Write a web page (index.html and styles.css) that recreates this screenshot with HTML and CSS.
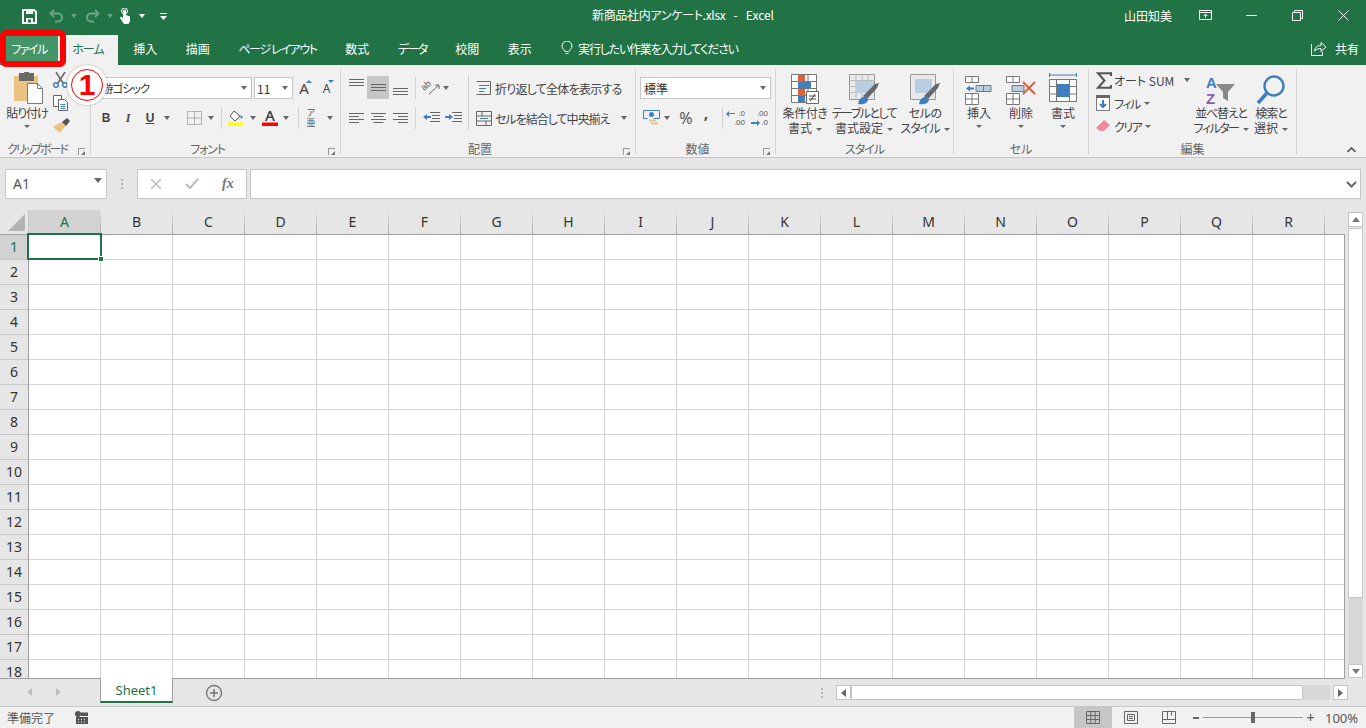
FILE: index.html
```html
<!DOCTYPE html>
<html lang="ja">
<head>
<meta charset="utf-8">
<title>新商品社内アンケート.xlsx - Excel</title>
<link rel="stylesheet" href="styles.css">
</head>
<body>
<div class="app">
  <header class="titlebar">
    <div class="qat">
      <span class="slot q-save"><svg width="15" height="15" viewBox="0 0 15 15"><path d="M1 1h11l2 2v11H1z" fill="none" stroke="#fff" stroke-width="2"/><path d="M4 1h7v4H4zM4 9h7v5H4z" fill="#fff"/><path d="M6 10.500h3v3H6z" fill="#217346"/></svg></span>
      <span class="slot q-undo"><svg width="15" height="14" viewBox="0 0 15 14"><path d="M5 1 1.500 4.500 5 8M2 4.500h7a4 4 0 0 1 0 8H6" fill="none" stroke="#6ba588" stroke-width="2"/></svg></span>
      <span class="slot q-car"><i class="caret dim"></i></span>
      <span class="slot q-redo"><svg width="15" height="14" viewBox="0 0 15 14"><path d="M10 1l3.500 3.500L10 8M13 4.500H6a4 4 0 0 0 0 8h3" fill="none" stroke="#6ba588" stroke-width="2"/></svg></span>
      <span class="slot q-car"><i class="caret dim"></i></span>
      <span class="slot q-touch"><svg width="13" height="16" viewBox="0 0 13 16"><path d="M4 7V3a1.500 1.500 0 0 1 3 0v4l4 1.500V13l-1.500 3H5L1 10l1-1.500L4 10z" fill="#fff"/><circle cx="5.500" cy="3" r="3" fill="none" stroke="#fff"/></svg></span>
      <span class="slot q-car2"><i class="caret wh"></i></span>
      <span class="slot q-cust"><svg width="7" height="7" viewBox="0 0 7 7"><path d="M0 0h7v1H0zM0 3h7L3.500 7z" fill="#fff"/></svg></span>
    </div>
    <div class="doc"><span class="t3">新商品社内アンケート.xlsx</span>&nbsp;&nbsp; - &nbsp;&nbsp;Excel</div>
    <div class="win">
      <span class="user">山田知美</span>
      <span class="winbtn"><svg width="13" height="10" viewBox="0 0 13 10"><path d="M.5.500h12v9H.5zM.5 2.500h12M6.500 8V4M4.500 6l2-2 2 2" fill="none" stroke="#fff"/></svg></span>
      <span class="winbtn"><svg width="11" height="1" viewBox="0 0 11 1"><path d="M0 0h11v1H0z" fill="#fff"/></svg></span>
      <span class="winbtn"><svg width="11" height="11" viewBox="0 0 11 11"><path d="M.5 2.500h8v8h-8zM2.500 2.500v-2h8v8h-2" fill="none" stroke="#fff"/></svg></span>
      <span class="winbtn"><svg width="11" height="11" viewBox="0 0 11 11"><path d="M.5.500l10 10M10.500.500l-10 10" fill="none" stroke="#fff"/></svg></span>
    </div>
  </header>

  <nav class="tabs">
    <span class="tab file t15">ファイル</span>
    <span class="tab home t1">ホーム</span>
    <span class="tab first">挿入</span>
    <span class="tab">描画</span>
    <span class="tab t13">ページ レイアウト</span>
    <span class="tab">数式</span>
    <span class="tab t15">データ</span>
    <span class="tab">校閲</span>
    <span class="tab">表示</span>
    <span class="tell"><svg width="12" height="15" viewBox="0 0 12 15"><path d="M4 10.500C3 8 1 7.500 1 5a5 5 0 0 1 10 0c0 2.500-2 3-3 5.500zM4.500 12.500h3" fill="none" stroke="#fff"/></svg><span class="t12">実行したい作業を入力してください</span></span>
    <span class="share"><svg width="16" height="16" viewBox="0 0 16 16"><path d="M.5 4v11.500h11V12" fill="none" stroke="#fff"/><path d="M3.500 11C4 7 6.500 5.500 10 5.500V2.500l5 4.500-5 4.500V8.500C7.500 8.500 5.500 9 3.500 11z" fill="none" stroke="#fff"/></svg>共有</span>
  </nav>

  <section class="ribbon">
    <div class="group g-clip">
      <div class="gbody row-top">
        <div class="big paste">
          <span class="bigicon shift"><svg class="flat" width="32" height="34" viewBox="0 0 32 34"><path d="M1 4h24v25H1z" fill="#ecc283"/><path d="M6 1h15v8H6z" fill="#6a6a6a"/><path d="M11 0h5v3h-5z" fill="#6a6a6a"/><path d="M14.500 11.500h10l5 5v15h-15z" fill="#fff" stroke="#7a7a7a"/><path d="M24.500 11.500v5h5" fill="none" stroke="#7a7a7a"/></svg></span>
          <span class="t1">貼り付け</span>
          <i class="caret"></i>
        </div>
        <div class="clip-tools">
          <span class="tool"><svg width="15" height="16" viewBox="0 0 15 16"><path d="M3 0l7 11M12 0L5 11" stroke="#666" stroke-width="1.500" fill="none"/><circle cx="3" cy="13" r="2.300" fill="none" stroke="#3f7fc0" stroke-width="1.500"/><circle cx="12" cy="13" r="2.300" fill="none" stroke="#3f7fc0" stroke-width="1.500"/></svg></span>
          <span class="tool"><svg width="16" height="16" viewBox="0 0 16 16"><path d="M.5.500h8v11h-8z" fill="#fff" stroke="#666"/><path d="M5.500 4.500h6l3 3v8h-9z" fill="#fff" stroke="#666"/><path d="M7.500 9.500h5M7.500 11.500h5M7.500 13.500h5" stroke="#3f7fc0"/></svg></span>
          <span class="tool"><svg width="17" height="16" viewBox="0 0 17 16"><path d="M9 4l4 4-4 4-2 3-7-6 3-2z" fill="#ecc283"/><path d="M9 4l5-4 3 3-4 5z" fill="#555"/></svg></span>
        </div>
      </div>
      <div class="glabel pad t2">クリップボード</div>
      <i class="launch"></i>
    </div>

    <div class="group g-font">
      <div class="gbody col">
        <div class="line l1">
          <span class="select fontsel t1">游ゴシック<i class="caret end"></i></span>
          <span class="select sizesel">11<i class="caret end"></i></span>
          <span class="slot w22 aa">A<i class="aup"></i></span>
          <span class="slot w22 aa small">A<i class="adn"></i></span>
        </div>
        <div class="line l2 font2">
          <span class="slot w22 fmt b">B</span>
          <span class="slot w22 fmt it">I</span>
          <span class="slot w22 fmt u">U</span>
          <span class="slot w12"><i class="caret"></i></span>
          <span class="slot w22 ml10"><svg width="15" height="14" viewBox="0 0 15 14"><path d="M.5.500h14v13H.5zM7.500.500v13M.5 7h14" fill="none" stroke="#777" stroke-dasharray="1 1"/></svg></span>
          <span class="slot w12"><i class="caret"></i></span>
          <i class="sep ml4"></i>
          <span class="slot w26 ml1"><svg width="18" height="16" viewBox="0 0 18 16"><path d="M7 1l6 5-5 5-5-5z" fill="#fff" stroke="#555"/><path d="M13 5l3 2-2 2z" fill="#3f7fc0"/><path d="M1 12.500h15V16H1z" fill="#ff0"/></svg></span>
          <span class="slot w8"><i class="caret"></i></span>
          <span class="slot w24 ml1"><svg width="16" height="16" viewBox="0 0 16 16"><path d="M3 11 7 1h2l4 10h-2L10 8H6l-1 3zM6.700 6.500h2.600L8 3z" fill="#444"/><path d="M0 12.500h16V16H0z" fill="#f00"/></svg></span>
          <span class="slot w8"><i class="caret"></i></span>
          <i class="sep ml8"></i>
          <span class="slot w27 phon"><b>ア</b><b>亜</b></span>
          <span class="slot w8"><i class="caret"></i></span>
        </div>
      </div>
      <div class="glabel pad t12">フォント</div>
      <i class="launch"></i>
    </div>

    <div class="group g-align">
      <div class="gbody align-body">
        <div class="col align-left">
          <div class="line l1">
            <span class="slot w22 al-top"><svg width="15" height="7" viewBox="0 0 15 7"><path d="M0 .500h15M0 3.500h15M0 6.500h15" stroke="#666"/></svg></span>
            <span class="slot w22 active"><svg width="15" height="7" viewBox="0 0 15 7"><path d="M0 .500h15M0 3.500h15M0 6.500h15" stroke="#666"/></svg></span>
            <span class="slot w22 al-bot"><svg width="15" height="7" viewBox="0 0 15 7"><path d="M0 .500h15M0 3.500h15M0 6.500h15" stroke="#666"/></svg></span>
            <i class="sep ml4"></i>
            <span class="slot w22 ml4"><svg class="orient-icon" width="17" height="15" viewBox="0 0 17 15"><text class="orient" transform="translate(1 10) rotate(-40)">ab</text><path d="M6 13 16 4M16 4v4M16 4h-4" fill="none" stroke="#666"/></svg></span>
            <span class="slot w8"><i class="caret"></i></span>
          </div>
          <div class="line l2">
            <span class="slot w22"><svg width="15" height="10" viewBox="0 0 15 10"><path d="M0 .500h15M0 3.500h10M0 6.500h15M0 9.500h10" stroke="#666"/></svg></span>
            <span class="slot w22"><svg width="15" height="10" viewBox="0 0 15 10"><path d="M0 .500h15M2.500 3.500h10M0 6.500h15M2.500 9.500h10" stroke="#666"/></svg></span>
            <span class="slot w22"><svg width="15" height="10" viewBox="0 0 15 10"><path d="M0 .500h15M5 3.500h10M0 6.500h15M5 9.500h10" stroke="#666"/></svg></span>
            <i class="sep ml4"></i>
            <span class="slot w22 ml4"><svg width="17" height="12" viewBox="0 0 17 12"><path d="M7 .500h10M9 3.500h8M9 6.500h8M7 9.500h10" stroke="#666" fill="none"/><path d="M0 5l4-3v2h4v2H4v2z" fill="#3f7fc0"/></svg></span>
            <span class="slot w22"><svg width="17" height="12" viewBox="0 0 17 12"><path d="M7 .500h10M9 3.500h8M9 6.500h8M7 9.500h10" stroke="#666" fill="none"/><path d="M8 5 4 2v2H0v2h4v2z" fill="#3f7fc0"/></svg></span>
          </div>
        </div>
        <i class="sep tall"></i>
        <div class="col align-right">
          <div class="line l1 cmd"><svg width="16" height="14" viewBox="0 0 16 14"><path d="M.5.500h14v13H.5" fill="none" stroke="#666"/><path d="M3 4.500h10M3 7.500h7M3 10.500h5" stroke="#3f7fc0"/></svg><span class="t75">折り返して全体を表示する</span></div>
          <div class="line l2 cmd"><svg width="16" height="15" viewBox="0 0 16 15"><path d="M.5.500h15v14H.5zM.5 5h15M.5 10h15M6 .500V5M10 10v4.500" fill="none" stroke="#666"/><path d="M4 7.500h8" stroke="#3f7fc0"/></svg><span class="t1">セルを結合して中央揃え</span><i class="caret merge"></i></div>
        </div>
      </div>
      <div class="glabel pad">配置</div>
      <i class="launch"></i>
    </div>

    <div class="group g-num">
      <div class="gbody col">
        <div class="line l1"><span class="select numsel">標準<i class="caret end"></i></span></div>
        <div class="line l2">
          <span class="slot w22"><svg width="17" height="16" viewBox="0 0 17 16"><path d="M.5.500h16v8h-6M.5.500v8h4" fill="none" stroke="#3f7fc0"/><circle cx="8.500" cy="4.500" r="2.500" fill="#3f7fc0"/><path d="M6 9.500h7v2H6zM8 12.500h7v2H8z" fill="#ecc283"/></svg></span>
          <span class="slot w8 ml1"><i class="caret"></i></span>
          <span class="slot w22 ml4 pct">%</span>
          <span class="slot w18 comma">,</span>
          <i class="sep ml7"></i>
          <span class="slot w22 ml3 dec"><span class="decl"><i class="arr left"></i>.0</span><span class="decl">.00</span></span>
          <span class="slot w22 ml1 dec"><span class="decl">.00</span><span class="decl"><i class="arr right"></i>.0</span></span>
        </div>
      </div>
      <div class="glabel pad">数値</div>
      <i class="launch"></i>
    </div>

    <div class="group g-style">
      <div class="gbody row-top">
        <div class="big w58">
          <span class="bigicon"><svg width="28" height="34" viewBox="0 0 28 34"><path d="M.5.500h25v28H.5zM.5 7.500h25M.5 14.500h25M.5 21.500h25M8.500.500v28M17 .500v28" fill="#fff" stroke="#777"/><path d="M7 1h7v7H7zM7 15h7v7H7z" fill="#e0603a"/><path d="M7 8h13v6H7zM7 22h7v6H7z" fill="#3f7fc0"/><path d="M15.500 17.500h12v12h-12z" fill="#fff" stroke="#666"/><path d="M18 22h7M18 25h7M24 20l-5 7.500" fill="none" stroke="#444"/></svg></span>
          <span class="t5">条件付き</span><span>書式<i class="caret il"></i></span>
        </div>
        <div class="big w60">
          <span class="bigicon"><svg width="30" height="34" viewBox="0 0 30 34"><path d="M.5.500h25v25H.5z" fill="#e9e9e9" stroke="#999"/><path d="M.5 6.500h25M.5 12.500h25M.5 18.500h25M7 .500v25M13 .500v25M19 .500v25" stroke="#bbb"/><path d="M7 7h18v12H7z" fill="#b9cde3"/><path d="M14 22 26 10l4-1-2 5-10 11z" fill="#666"/><path d="M9 30c1-6 5-8 9-7l1 3c-1 4-6 5-10 4z" fill="#3f7fc0"/></svg></span>
          <span class="t15">テーブルとして</span><span>書式設定<i class="caret il"></i></span>
        </div>
        <div class="big w56 ml3">
          <span class="bigicon"><svg width="30" height="34" viewBox="0 0 30 34"><path d="M.5.500h25v25H.5z" fill="#e9e9e9" stroke="#999"/><path d="M5 5h17v14H5z" fill="#b9cde3"/><path d="M14 22 26 10l4-1-2 5-10 11z" fill="#666"/><path d="M9 30c1-6 5-8 9-7l1 3c-1 4-6 5-10 4z" fill="#3f7fc0"/></svg></span>
          <span class="t5">セルの</span><span class="t1">スタイル<i class="caret il"></i></span>
        </div>
      </div>
      <div class="glabel t1">スタイル</div>
    </div>

    <div class="group g-cells">
      <div class="gbody row-top">
        <div class="big w42">
          <span class="bigicon"><svg width="28" height="34" viewBox="0 0 28 34"><path d="M.5 2.500h13v6H.5zM7 2.500v6M.5 19.500h13v11H.5zM.5 25h13M7 19.500v11" fill="#fff" stroke="#777"/><path d="M11 11.500h15v6H11zM18.500 11.500v6" fill="#b9cde3" stroke="#777"/><path d="M1 14.500l4-3v2h4v2H5v2z" fill="#3f7fc0"/></svg></span>
          <span>挿入</span><i class="caret"></i>
        </div>
        <div class="big w42">
          <span class="bigicon"><svg width="30" height="34" viewBox="0 0 30 34"><path d="M.5 2.500h13v6H.5zM7 2.500v6M.5 19.500h13v11H.5zM.5 25h13M7 19.500v11" fill="#fff" stroke="#777"/><path d="M6 11.500h12v6H6z" fill="#b9cde3" stroke="#777"/><path d="M17 8l12 12M29 8 17 20" stroke="#e0603a" stroke-width="2"/></svg></span>
          <span>削除</span><i class="caret"></i>
        </div>
        <div class="big w42">
          <span class="bigicon fmt-icon"><svg width="28" height="34" viewBox="0 0 28 34"><path d="M.5 3h27M.5 1v4M27.500 1v4" stroke="#3f7fc0" fill="none"/><path d="M.5 7.500h27v22H.5zM.5 14.500h27M.5 22h27M7.500 7.500v22M20.500 7.500v22" fill="#fff" stroke="#777"/><path d="M8 12h12v13H8z" fill="#3f7fc0"/></svg></span>
          <span>書式</span><i class="caret"></i>
        </div>
      </div>
      <div class="glabel">セル</div>
    </div>

    <div class="group g-edit">
      <div class="gbody row-top">
        <div class="edit-col">
          <div class="eline"><svg class="sigma" width="16" height="17" viewBox="0 0 16 17"><path d="M15 4V1.200H2L8.500 8.500 2 15.800h13V13" fill="none" stroke="#555" stroke-width="2"/></svg><span>オート SUM</span><i class="caret ml10"></i></div>
          <div class="eline"><svg width="14" height="16" viewBox="0 0 14 16"><path d="M.5.500h13v15H.5z" fill="#fff" stroke="#777"/><path d="M0 0h14v3H0z" fill="#666"/><path d="M7 5v7M4 9l3 3 3-3" fill="none" stroke="#3f7fc0" stroke-width="2"/></svg><span class="ell t15">フィル</span><i class="caret il"></i></div>
          <div class="eline"><svg width="14" height="13" viewBox="0 0 14 13"><path d="M8 0l6 5-6 6H4L0 8z" fill="#ee8a9a"/></svg><span class="ell t15">クリア</span><i class="caret il"></i></div>
        </div>
        <div class="big w56">
          <span class="bigicon"><svg width="32" height="34" viewBox="0 0 32 34"><text x="1" y="14" class="az a">A</text><text x="1" y="30" class="az z">Z</text><path d="M11 10h19l-7 8v9l-5-3v-6z" fill="#8a8a8a"/></svg></span>
          <span class="t12">並べ替えと</span><span class="t15">フィルター<i class="caret il"></i></span>
        </div>
        <div class="big w44">
          <span class="bigicon"><svg width="30" height="34" viewBox="0 0 30 34"><circle cx="18" cy="12" r="9.500" fill="none" stroke="#3f7fc0" stroke-width="2.400"/><path d="M11 19 2 29" stroke="#3f7fc0" stroke-width="3.500"/></svg></span>
          <span class="t1">検索と</span><span>選択<i class="caret il"></i></span>
        </div>
      </div>
      <div class="glabel">編集</div>
    </div>
    <svg class="collapse" width="9" height="6" viewBox="0 0 9 6"><path d="M.5 5l4-4 4 4" fill="none" stroke="#555" stroke-width="1.600"/></svg>
  </section>

  <section class="fbar">
    <div class="box namebox">A1<i class="caret end big-car"></i></div>
    <div class="grip"><i></i><i></i><i></i></div>
    <div class="box fxbox">
      <svg width="12" height="12" viewBox="0 0 12 12"><path d="M1 1l10 10M11 1 1 11" stroke="#bdbdbd" stroke-width="1.500"/></svg>
      <svg width="14" height="12" viewBox="0 0 14 12"><path d="M1 6l4 4 8-9" fill="none" stroke="#bdbdbd" stroke-width="2.200"/></svg>
      <span class="fx">fx</span>
    </div>
    <div class="box formula"><svg class="chev" width="11" height="7" viewBox="0 0 11 7"><path d="M1 1l4.500 4.500L10 1" fill="none" stroke="#666" stroke-width="2"/></svg></div>
  </section>

  <section class="sheet">
    <div class="sheet-main">
      <div class="colhead">
        <div class="corner"><i></i></div>
        <div class="ch on">A</div><div class="ch">B</div><div class="ch">C</div><div class="ch">D</div><div class="ch">E</div><div class="ch">F</div><div class="ch">G</div><div class="ch">H</div><div class="ch">I</div><div class="ch">J</div><div class="ch">K</div><div class="ch">L</div><div class="ch">M</div><div class="ch">N</div><div class="ch">O</div><div class="ch">P</div><div class="ch">Q</div><div class="ch">R</div><div class="ch tail"></div>
      </div>
      <div class="gridbody">
        <div class="rowhead">
          <div class="rh on">1</div><div class="rh">2</div><div class="rh">3</div><div class="rh">4</div><div class="rh">5</div><div class="rh">6</div><div class="rh">7</div><div class="rh">8</div><div class="rh">9</div><div class="rh">10</div><div class="rh">11</div><div class="rh">12</div><div class="rh">13</div><div class="rh">14</div><div class="rh">15</div><div class="rh">16</div><div class="rh">17</div><div class="rh">18</div>
        </div>
        <div class="cells"></div>
        <div class="selection"><i></i></div>
      </div>
    </div>
    <div class="vscroll">
      <span class="sbtn up"></span>
      <span class="thumb"></span>
      <span class="track"></span>
      <span class="sbtn down"></span>
    </div>
  </section>

  <section class="tabbar">
    <div class="nav"><i class="tri l"></i><i class="tri r"></i></div>
    <div class="sheettab">Sheet1</div>
    <svg class="addsheet" width="18" height="18" viewBox="0 0 18 18"><circle cx="9" cy="9" r="7.500" fill="none" stroke="#777" stroke-width="1.300"/><path d="M5 9h8M9 5v8" stroke="#777" stroke-width="1.600"/></svg>
    <div class="hs">
      <div class="grip g2"><i></i><i></i><i></i></div>
      <span class="hbtn"><i class="tri l dark"></i></span>
      <span class="hthumb"></span>
      <span class="htrack"></span>
      <span class="hbtn last"><i class="tri r dark"></i></span>
    </div>
  </section>

  <footer class="status">
    <span class="ready">準備完了</span>
    <svg class="macro" width="13" height="13" viewBox="0 0 13 13"><circle cx="3" cy="3" r="3" fill="#555"/><path d="M1 6h12v7H1zM6 1.500h7V5H6z" fill="#555"/><path d="M3 8h1v1H3zM6 8h1v1H6zM9 8h1v1H9zM3 10.500h1v1H3zM6 10.500h1v1H6zM9 10.500h1v1H9z" fill="#f1f1f1"/></svg>
    <div class="views">
      <span class="view on"><svg width="14" height="13" viewBox="0 0 14 13"><path d="M.5.500h13v12H.5zM.5 4.500h13M.5 8.500h13M4.800.500v12M9.200.500v12" fill="none" stroke="#666"/></svg></span>
      <span class="view"><svg width="14" height="13" viewBox="0 0 14 13"><path d="M.5.500h13v12H.5z" fill="none" stroke="#666"/><path d="M3.500 3.500h7v6h-7zM5 5.500h4M5 7.500h4" fill="none" stroke="#666"/></svg></span>
      <span class="view"><svg width="14" height="13" viewBox="0 0 14 13"><path d="M.5.500h13v12H.5zM.5 8.500h13M5.500.500v8M9.500.500v4" fill="none" stroke="#666"/></svg></span>
    </div>
    <div class="zoom">
      <i class="minus"></i>
      <div class="slider"><i></i></div>
      <svg width="7" height="7" viewBox="0 0 7 7"><path d="M0 3h7v1.300H0zM2.900 0h1.300v7H2.900z" fill="#666"/></svg>
      <span class="pctz">100%</span>
    </div>
  </footer>
</div>

<div class="mark-rect"></div>
<div class="mark-num"><span>1</span></div>
</body>
</html>
```
FILE: styles.css
```css
* { box-sizing: border-box; }
html, body { margin: 0; height: 100%; overflow: hidden; }
body {
  font-family: "Noto Sans CJK JP", "Noto Sans", sans-serif;
  font-size: 12px;
  color: #444;
  font-feature-settings: "palt";
  background: #e6e6e6;
}
i { font-style: normal; display: block; }
b { font-weight: normal; display: block; }
svg { display: block; flex: none; }
.app { display: flex; flex-direction: column; width: 1366px; height: 728px; }

.t3 { letter-spacing: -.3px; }
.t5 { letter-spacing: -.4px; }
.t75 { letter-spacing: -.75px; }
.t1 { letter-spacing: -1px; }
.t12 { letter-spacing: -1.2px; }
.t13 { letter-spacing: -1.35px; }
.t15 { letter-spacing: -1.5px; }
.t2 { letter-spacing: -2px; }

.caret { width: 0; height: 0; border-left: 3.5px solid transparent; border-right: 3.5px solid transparent; border-top: 4px solid #666; flex: none; }
.caret.dim { border-top-color: #6ba588; }
.caret.wh { border-top-color: #fff; }
.caret.il { display: inline-block; margin-left: 4px; vertical-align: 2px; border-left-width: 3px; border-right-width: 3px; border-top-width: 3px; }

.slot { display: flex; align-items: center; justify-content: center; flex: none; height: 22px; }
.w8 { width: 8px; } .w12 { width: 12px; } .w18 { width: 18px; } .w22 { width: 22px; } .w24 { width: 24px; } .w26 { width: 26px; } .w27 { width: 27px; }
.ml1 { margin-left: 1px; } .ml3 { margin-left: 3px; } .ml4 { margin-left: 4px; } .ml7 { margin-left: 7px; } .ml8 { margin-left: 8px; } .ml10 { margin-left: 10px; }

/* title bar */
.titlebar { height: 35px; background: #217346; color: #fff; display: grid; grid-template-columns: 1fr auto 1fr; align-items: start; flex: none; }
.qat { display: flex; align-items: center; padding-left: 15px; height: 32px; }
.q-save { width: 28px; } .q-undo { width: 27px; } .q-car { width: 8px; } .q-redo { width: 27px; margin-left: 1px; } .q-touch { width: 22px; } .q-car2 { width: 8px; margin-left: 2px; } .q-cust { width: 24px; margin-left: 5px; }
.doc { font-size: 12px; line-height: 30px; height: 30px; }
.win { display: flex; justify-content: flex-end; align-items: center; height: 30px; }
.user { margin-right: 10px; }
.winbtn { width: 46px; height: 30px; display: flex; align-items: center; justify-content: center; }

/* tabs */
.tabs { height: 30px; background: #217346; color: #fff; display: flex; align-items: stretch; flex: none; }
.tab { padding: 0 14.25px 4px; display: flex; align-items: center; white-space: nowrap; }
.tab.file { width: 58px; padding: 0 0 4px; justify-content: center; background: #439467; }
.tab.home { width: 60px; padding: 0 0 4px; justify-content: center; background: #f1f1f1; color: #217346; }
.tab.first { margin-left: 1px; }
.tell { display: flex; align-items: center; gap: 5px; margin-left: 15px; padding-bottom: 4px; }
.share { display: flex; align-items: center; gap: 8px; margin-left: auto; padding: 0 7px 4px 0; }

/* ribbon */
.ribbon { height: 93px; background: #f1f1f1; border-bottom: 1px solid #c6c6c6; display: flex; padding-top: 4px; position: relative; flex: none; }
.group { height: 85px; border-right: 1px solid #d6d6d6; display: flex; flex-direction: column; position: relative; padding-top: 3px; flex: none; }
.g-clip { width: 91px; } .g-font { width: 250px; } .g-align { width: 295px; } .g-num { width: 140px; } .g-style { width: 178px; } .g-cells { width: 135px; } .g-edit { width: 208px; }
.gbody { flex: 1; min-height: 0; }
.glabel { height: 14px; line-height: 14px; margin-bottom: -2px; text-align: center; color: #666; flex: none; }
.glabel.pad { padding-right: 16px; }
.launch { position: absolute; right: 5px; bottom: -1px; width: 7px; height: 7px; border-left: 1px solid #999; border-top: 1px solid #999; }
.launch::after { content: ""; position: absolute; right: 0; bottom: 0; width: 0; height: 0; border-left: 4px solid transparent; border-bottom: 4px solid #777; }
.row-top { display: flex; }
.col { display: flex; flex-direction: column; }
.line { display: flex; align-items: center; height: 22px; flex: none; }
.l1 { margin-top: 5px; }
.l2 { margin-top: 8px; }
.sep { width: 1px; height: 22px; background: #d0d0d0; flex: none; }
.sep.tall { height: 55px; margin-top: 3px; }

.big { display: flex; flex-direction: column; align-items: center; line-height: 15px; flex: none; white-space: nowrap; }
.big .caret:not(.il) { margin-top: 5px; border-left-width: 3px; border-right-width: 3px; border-top-width: 3px; }
.bigicon { height: 33px; display: flex; justify-content: center; }
.bigicon svg { margin-top: 2px; }
.bigicon svg.flat { margin-top: 0; }
.bigicon.shift { padding-left: 4px; }
.bigicon.fmt-icon svg { margin-top: 0; }
.w42 { width: 42px; } .w44 { width: 44px; } .w56 { width: 56px; } .w58 { width: 58px; } .w60 { width: 60px; }

.g-clip .gbody { padding-left: 5px; }
.paste { width: 44px; }
.clip-tools { display: flex; flex-direction: column; margin-left: 4px; gap: 7px; }
.tool { display: flex; height: 16px; }

.select { background: #fff; border: 1px solid #c6c6c6; height: 22px; display: flex; align-items: center; padding-left: 3px; position: relative; flex: none; color: #333; }
.caret.end { position: absolute; right: 4px; top: 8px; }
.fontsel { width: 153px; margin-left: 8px; padding-left: 2px; font-size: 11.5px; }
.sizesel { width: 39px; margin-left: 2px; padding-left: 2px; }
.aa { font-size: 15px; position: relative; font-family: "Noto Sans", sans-serif; margin-left: 2px; padding-right: 4px; }
.aa + .aa { margin-left: 0; padding-right: 3px; }
.aa.small { font-size: 12px; }
.aup, .adn { position: absolute; right: 5px; top: 3px; width: 0; height: 0; border-left: 3px solid transparent; border-right: 3px solid transparent; }
.aup { border-bottom: 3px solid #3f7fc0; }
.adn { border-top: 3px solid #3f7fc0; }
.font2 { padding-left: 4px; }
.fmt { font-family: "Liberation Sans", sans-serif; font-size: 12px; color: #444; font-weight: bold; }
.fmt.it { font-style: italic; font-family: "Liberation Serif", serif; }
.fmt.u { text-decoration: underline; }
.phon { flex-direction: column; font-family: "Liberation Sans", "Noto Sans CJK JP", sans-serif; line-height: 10.5px; font-size: 9px; color: #555; padding-right: 3px; }

.align-body { display: flex; padding-left: 4px; }
.align-left { width: 123px; flex: none; }
.al-top { align-items: flex-start; padding-top: 2px; }
.al-bot { align-items: flex-end; padding-bottom: 4px; }
.active { background: #c6c6c6; height: 23px; align-self: flex-start; margin-top: -1px; }
.orient-icon { overflow: visible; }
.orient { font-size: 9px; fill: #555; font-family: "Liberation Sans", sans-serif; }
.align-right { margin-left: 7px; flex: none; }
.cmd { gap: 3px; white-space: nowrap; }
.caret.merge { margin-left: 9px; }

.g-num .gbody { padding-left: 4px; }
.numsel { width: 131px; }
.pct { font-size: 16px; color: #555; font-family: "Noto Sans", sans-serif; }
.comma { font-size: 16px; font-weight: bold; color: #555; font-family: "Noto Sans", sans-serif; padding-bottom: 10px; }
.dec { flex-direction: column; align-items: stretch; font-family: "Liberation Sans", sans-serif; font-size: 8px; line-height: 9.5px; color: #555; padding: 0 3px 0 2px; }
.decl { display: flex; justify-content: flex-end; align-items: center; gap: 1px; height: 9.5px; }
.arr { width: 7px; height: 1.5px; background: #3f7fc0; position: relative; flex: none; margin-right: auto; }
.arr::after { content: ""; position: absolute; top: -2px; width: 0; height: 0; border-top: 3px solid transparent; border-bottom: 3px solid transparent; }
.arr.left::after { left: -2px; border-right: 3px solid #3f7fc0; }
.arr.right::after { right: -2px; border-left: 3px solid #3f7fc0; }
.az { font-family: "Liberation Sans", sans-serif; font-weight: bold; font-size: 15px; }
.az.a { fill: #3f7fc0; } .az.z { fill: #8e5cb5; }

.g-cells .gbody { padding-left: 4px; }
.g-edit .gbody { padding-left: 7px; }
.edit-col { width: 97px; margin-top: -3px; display: flex; flex-direction: column; gap: 1px; flex: none; }
.eline { height: 22px; display: flex; align-items: center; white-space: nowrap; }
.sigma { margin-right: 2px; }
.ell { margin-left: 4px; }
.collapse { position: absolute; right: 10px; bottom: 4px; }

/* formula bar */
.fbar { height: 52px; background: #e6e6e6; display: flex; align-items: flex-start; padding: 11px 0 0 5px; flex: none; }
.box { height: 30px; background: #fff; border: 1px solid #c6c6c6; flex: none; position: relative; }
.namebox { width: 102px; font-size: 14px; line-height: 28px; padding-left: 7px; color: #555; font-family: "Noto Sans", sans-serif; }
.big-car { top: 12px; right: 6px; border-left-width: 4px; border-right-width: 4px; border-top-width: 5px; }
.grip { width: 30px; height: 30px; display: flex; flex-direction: column; align-items: center; justify-content: center; gap: 2px; flex: none; }
.grip i { width: 2px; height: 2px; background: #b4b4b4; }
.fxbox { width: 110px; display: flex; align-items: center; padding-left: 12px; }
.fxbox svg + svg { margin-left: 23px; }
.fx { font-family: "Liberation Serif", serif; font-style: italic; font-weight: bold; font-size: 14px; color: #777; margin-left: 23px; }
.formula { width: 1111px; margin-left: 3px; }
.chev { position: absolute; right: 3px; top: 11px; }

/* sheet */
.sheet { height: 469px; display: flex; flex: none; background: #e6e6e6; }
.sheet-main { width: 1345px; height: 469px; border-bottom: 1px solid #9f9f9f; display: flex; flex-direction: column; overflow: hidden; }
.colhead { height: 25px; display: flex; flex: none; border-bottom: 1px solid #9f9f9f; }
.corner { width: 29px; position: relative; flex: none; border-right: 1px solid #c6c6c6; }
.corner i { position: absolute; right: 3px; bottom: 3px; width: 0; height: 0; border-left: 17px solid transparent; border-bottom: 17px solid #b4b4b4; }
.ch { width: 72px; flex: none; text-align: center; line-height: 24px; font-size: 14px; color: #333; font-family: "Noto Sans", sans-serif; border-right: 1px solid; border-image: linear-gradient(#e6e6e6, #a5a5a5) 1; }
.ch.on { background: #d2d2d2; color: #217346; }
.ch.tail { width: 20px; border: 0; }
.gridbody { flex: 1; display: flex; position: relative; min-height: 0; }
.rowhead { width: 29px; border-right: 1px solid #9f9f9f; flex: none; }
.rh { height: 25px; text-align: center; line-height: 24px; font-size: 14px; color: #333; font-family: "Noto Sans", sans-serif; border-bottom: 1px solid #c6c6c6; }
.rh.on { background: #d2d2d2; color: #217346; }
.cells { flex: 1; background-color: #fff; background-image: linear-gradient(to right, transparent 71px, #d4d4d4 71px), linear-gradient(to bottom, transparent 24px, #d4d4d4 24px); background-size: 72px 25px; border-right: 1px solid #9f9f9f; }
.selection { position: absolute; left: 27px; top: -2px; width: 75px; height: 27px; border: 2px solid #217346; }
.selection i { position: absolute; right: -4px; bottom: -4px; width: 6px; height: 6px; background: #217346; border: 1px solid #fff; }
.vscroll { width: 15px; margin-left: 3px; display: flex; flex-direction: column; height: 468px; }
.sbtn { height: 15px; background: #fff; border: 1px solid #c6c6c6; flex: none; position: relative; }
.sbtn::after { content: ""; position: absolute; left: 2.5px; top: 4px; width: 0; height: 0; border-left: 4px solid transparent; border-right: 4px solid transparent; }
.sbtn.up { margin-top: 2px; }
.sbtn.up::after { border-bottom: 5px solid #777; }
.sbtn.down { height: 14px; }
.sbtn.down::after { border-top: 5px solid #777; }
.thumb { height: 370px; margin-top: 1px; background: #fff; border: 1px solid #c6c6c6; flex: none; }
.track { flex: 1; background: #d8d8d8; }

/* tab bar */
.tabbar { height: 27px; display: flex; align-items: flex-start; background: #e6e6e6; flex: none; position: relative; }
.nav { width: 100px; height: 26px; display: flex; align-items: center; padding-left: 27px; gap: 24px; flex: none; }
.tri { width: 0; height: 0; border-top: 4px solid transparent; border-bottom: 4px solid transparent; }
.tri.l { border-right: 5px solid #bdbdbd; }
.tri.r { border-left: 5px solid #bdbdbd; }
.tri.l.dark { border-right-color: #666; }
.tri.r.dark { border-left-color: #666; }
.sheettab { width: 73px; height: 25px; margin-top: -1px; background: #fff; border: 1px solid #9f9f9f; border-top: 0; border-bottom: 2px solid #217346; color: #217346; text-align: center; font-family: "Noto Sans", sans-serif; font-size: 13px; line-height: 25px; flex: none; z-index: 1; position: relative; }
.addsheet { margin: 5px 0 0 32px; }
.hs { margin-left: auto; display: flex; align-items: center; height: 15px; margin-top: 6px; padding-right: 18px; }
.g2 { width: 16px; height: 15px; align-items: flex-start; padding-left: 1px; }
.hbtn { width: 15px; height: 15px; background: #fff; border: 1px solid #c6c6c6; display: flex; align-items: center; justify-content: center; flex: none; }
.hbtn.last { margin-left: 3px; }
.hthumb { width: 452px; height: 15px; background: #fff; border: 1px solid #c6c6c6; flex: none; }
.htrack { width: 27px; height: 15px; background: #d8d8d8; flex: none; }

/* status bar */
.status { height: 22px; background: #f1f1f1; border-top: 1px solid #c6c6c6; display: flex; align-items: center; flex: none; color: #555; }
.ready { margin-left: 7px; }
.macro { margin-left: 20px; }
.views { margin-left: auto; display: flex; height: 21px; }
.view { width: 38px; display: flex; align-items: center; justify-content: center; }
.view.on { background: #c6c6c6; }
.zoom { display: flex; align-items: center; margin-left: 5px; padding-right: 8px; }
.minus { width: 6px; height: 2px; background: #666; }
.slider { width: 100px; height: 1px; background: #999; margin: 0 4px; position: relative; }
.slider i { position: absolute; left: 48px; top: -5px; width: 4px; height: 11px; background: #666; }
.pctz { margin-left: 11px; font-family: "Noto Sans", sans-serif; font-size: 13px; width: 33px; white-space: nowrap; }

/* annotations */
.mark-rect { position: absolute; left: 0; top: 30px; width: 66px; height: 37px; border: 6px solid #f00; border-radius: 6px; }
.mark-num { position: absolute; left: 67px; top: 65px; width: 40px; height: 40px; border-radius: 50%; background: rgba(255,255,255,.88); box-shadow: 0 0 2px rgba(0,0,0,.4); display: flex; align-items: center; justify-content: center; }
.mark-num::before { content: ""; position: absolute; inset: 4px; border: 1.5px solid #f00; border-radius: 50%; }
.mark-num span { font: bold 30px/1 "Liberation Sans", sans-serif; color: #f00; }
```
